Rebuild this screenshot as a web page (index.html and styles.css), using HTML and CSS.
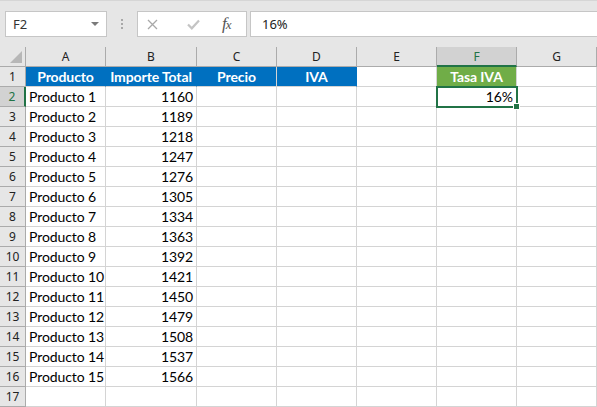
FILE: index.html
```html
<!DOCTYPE html>
<html lang="es">
<head>
<meta charset="utf-8">
<title>Excel</title>
<link rel="stylesheet" href="styles.css">
</head>
<body>
<div class="toolbar">
  <div class="namebox"><span class="nb-text">F2</span><span class="nb-arrow"></span></div>
  <div class="grip"><i></i><i></i><i></i></div>
  <div class="fbuttons">
    <svg class="ic-x" width="11" height="11" viewBox="0 0 11 11"><path d="M1 1L10 10M10 1L1 10" stroke="#a8a8a8" stroke-width="1.3" fill="none"/></svg>
    <svg class="ic-check" width="13" height="11" viewBox="0 0 13 11"><path d="M1 5.5L4.8 9.3L12 1.5" stroke="#c4c4c4" stroke-width="2.2" fill="none"/></svg>
    <span class="ic-fx">f<small>x</small></span>
  </div>
  <div class="finput">16%</div>
</div>
<div class="sheet">
  <div class="corner"><span class="tri"></span></div>
  <div class="ch">A</div><div class="ch">B</div><div class="ch">C</div><div class="ch">D</div><div class="ch">E</div><div class="ch sel">F</div><div class="ch">G</div>

  <div class="rh">1</div>
  <div class="c hb">Producto</div><div class="c hb">Importe Total</div><div class="c hb">Precio</div><div class="c hb">IVA</div><div class="c"></div><div class="c hg">Tasa IVA</div><div class="c"></div>

  <div class="rh sel">2</div>
  <div class="c">Producto 1</div><div class="c n">1160</div><div class="c"></div><div class="c"></div><div class="c"></div><div class="c n active">16%<span class="handle"></span></div><div class="c"></div>

  <div class="rh">3</div><div class="c">Producto 2</div><div class="c n">1189</div><div class="c"></div><div class="c"></div><div class="c"></div><div class="c"></div><div class="c"></div>
  <div class="rh">4</div><div class="c">Producto 3</div><div class="c n">1218</div><div class="c"></div><div class="c"></div><div class="c"></div><div class="c"></div><div class="c"></div>
  <div class="rh">5</div><div class="c">Producto 4</div><div class="c n">1247</div><div class="c"></div><div class="c"></div><div class="c"></div><div class="c"></div><div class="c"></div>
  <div class="rh">6</div><div class="c">Producto 5</div><div class="c n">1276</div><div class="c"></div><div class="c"></div><div class="c"></div><div class="c"></div><div class="c"></div>
  <div class="rh">7</div><div class="c">Producto 6</div><div class="c n">1305</div><div class="c"></div><div class="c"></div><div class="c"></div><div class="c"></div><div class="c"></div>
  <div class="rh">8</div><div class="c">Producto 7</div><div class="c n">1334</div><div class="c"></div><div class="c"></div><div class="c"></div><div class="c"></div><div class="c"></div>
  <div class="rh">9</div><div class="c">Producto 8</div><div class="c n">1363</div><div class="c"></div><div class="c"></div><div class="c"></div><div class="c"></div><div class="c"></div>
  <div class="rh">10</div><div class="c">Producto 9</div><div class="c n">1392</div><div class="c"></div><div class="c"></div><div class="c"></div><div class="c"></div><div class="c"></div>
  <div class="rh">11</div><div class="c">Producto 10</div><div class="c n">1421</div><div class="c"></div><div class="c"></div><div class="c"></div><div class="c"></div><div class="c"></div>
  <div class="rh">12</div><div class="c">Producto 11</div><div class="c n">1450</div><div class="c"></div><div class="c"></div><div class="c"></div><div class="c"></div><div class="c"></div>
  <div class="rh">13</div><div class="c">Producto 12</div><div class="c n">1479</div><div class="c"></div><div class="c"></div><div class="c"></div><div class="c"></div><div class="c"></div>
  <div class="rh">14</div><div class="c">Producto 13</div><div class="c n">1508</div><div class="c"></div><div class="c"></div><div class="c"></div><div class="c"></div><div class="c"></div>
  <div class="rh">15</div><div class="c">Producto 14</div><div class="c n">1537</div><div class="c"></div><div class="c"></div><div class="c"></div><div class="c"></div><div class="c"></div>
  <div class="rh">16</div><div class="c">Producto 15</div><div class="c n">1566</div><div class="c"></div><div class="c"></div><div class="c"></div><div class="c"></div><div class="c"></div>
  <div class="rh">17</div><div class="c"></div><div class="c"></div><div class="c"></div><div class="c"></div><div class="c"></div><div class="c"></div><div class="c"></div>
</div>
</body>
</html>
```
FILE: styles.css
```css
html, body {
  margin: 0;
  padding: 0;
  background: #ffffff;
  overflow: hidden;
}
body {
  width: 597px;
  height: 407px;
  font-family: "Noto Sans", "Open Sans", sans-serif;
}
.toolbar {
  height: 47px;
  box-sizing: border-box;
  background: #e6e6e6;
  border-top: 1px solid #d6d6d6;
  display: flex;
  align-items: flex-start;
  padding-top: 10px;
}
.namebox {
  margin-left: 5px;
  width: 102px;
  height: 26px;
  box-sizing: border-box;
  border: 1px solid #c6c6c6;
  background: #ffffff;
  display: flex;
  align-items: center;
  justify-content: space-between;
  padding: 0 7px 0 7px;
  font-size: 13px;
  color: #333;
}
.nb-arrow {
  width: 0;
  height: 0;
  border-left: 4px solid transparent;
  border-right: 4px solid transparent;
  border-top: 4px solid #7a7a7a;
}
.grip {
  width: 30px;
  height: 26px;
  display: flex;
  flex-direction: column;
  align-items: center;
  justify-content: center;
  gap: 2px;
}
.grip i {
  display: block;
  width: 2px;
  height: 2px;
  background: #a8a8a8;
}
.fbuttons {
  width: 110px;
  height: 26px;
  box-sizing: border-box;
  border: 1px solid #c6c6c6;
  background: #ffffff;
  display: flex;
  align-items: center;
  padding-left: 9px;
}
.ic-x { margin-right: 29px; }
.ic-check { margin-right: 22px; }
.ic-fx {
  font-family: "Liberation Serif", serif;
  font-style: italic;
  font-size: 17px;
  line-height: 20px;
  color: #555;
  letter-spacing: -1px;
}
.ic-fx small { font-size: 13px; }
.finput {
  margin-left: 3px;
  flex: 1;
  height: 26px;
  box-sizing: border-box;
  border: 1px solid #c6c6c6;
  border-right: none;
  background: #ffffff;
  font-size: 13px;
  color: #222;
  padding-left: 11px;
  line-height: 24px;
}
.sheet {
  display: grid;
  grid-template-columns: 26px 80px 91px 80px 80px 80px 80px 80px;
  grid-auto-rows: 20px;
}
.corner, .ch, .rh, .c {
  box-sizing: border-box;
  border-right: 1px solid #d4d4d4;
  border-bottom: 1px solid #d4d4d4;
}
.corner {
  background: #e6e6e6;
  border-right-color: #ababab;
  border-bottom-color: #ababab;
  position: relative;
}
.tri {
  position: absolute;
  right: 3px;
  bottom: 3px;
  width: 0;
  height: 0;
  border-left: 12px solid transparent;
  border-bottom: 12px solid #b7b7b7;
}
.ch {
  background: #e6e6e6;
  border-right-color: #ababab;
  border-bottom-color: #ababab;
  text-align: center;
  font-size: 12px;
  line-height: 20px;
  color: #222;
}
.ch.sel {
  background: #d2d2d2;
  color: #217346;
  border-bottom: 2px solid #217346;
}
.rh {
  background: #e6e6e6;
  border-right-color: #ababab;
  border-bottom-color: #ababab;
  text-align: center;
  font-size: 12px;
  line-height: 20px;
  color: #222;
}
.rh.sel {
  background: #d2d2d2;
  color: #217346;
  border-right: 2px solid #217346;
}
.c {
  font-family: "Lato", "Liberation Sans", sans-serif;
  font-size: 14px;
  letter-spacing: -0.1px;
  line-height: 20px;
  color: #000;
  padding: 0 3px;
  white-space: nowrap;
  overflow: visible;
}
.n { text-align: right; }
.hb {
  background: #0070c0;
  border-right-color: #0070c0;
  border-bottom-color: #d4d4d4;
  color: #ffffff;
  font-weight: bold;
  text-align: center;
}
.hb:nth-child(12) { border-right-color: #d4d4d4; }
.hg {
  background: #70ad47;
  color: #ffffff;
  font-weight: bold;
  text-align: center;
}
.active {
  position: relative;
  outline: 2px solid #217346;
  outline-offset: -1px;
  z-index: 2;
}
.handle {
  position: absolute;
  right: -4px;
  bottom: -4px;
  width: 5px;
  height: 5px;
  background: #217346;
  border: 1px solid #ffffff;
}
```
